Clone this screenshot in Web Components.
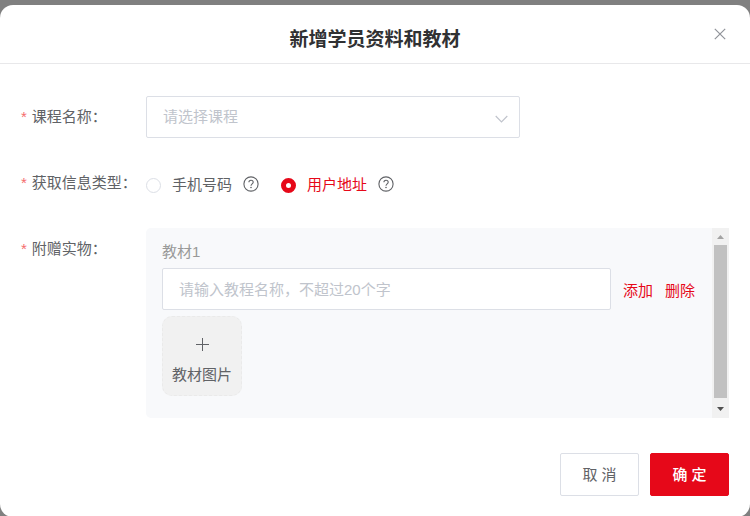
<!DOCTYPE html>
<html lang="zh-CN">
<head>
<meta charset="utf-8">
<meta name="viewport" content="width=device-width, initial-scale=1">
<title>新增学员资料和教材</title>
<style>
  :root {
    --red: #e60819;
    --text: #606266;
    --title: #303133;
    --hint: #c0c4cc;
    --line: #dcdfe6;
    --panel: #f8f9fb;
  }
  body {
    margin: 0;
    background: #808080;
    color: var(--text);
    font: 15px/20px "Liberation Sans", "Noto Sans CJK SC", sans-serif;
  }
</style>
</head>
<body>
<modal-dialog heading="新增学员资料和教材">
  <select-field label="课程名称" placeholder="请选择课程"></select-field>
  <radio-field label="获取信息类型">
    <radio-option name="type" value="phone" label="手机号码"></radio-option>
    <radio-option name="type" value="address" label="用户地址" checked></radio-option>
  </radio-field>
  <gift-field label="附赠实物">
    <gift-item label="教材1" placeholder="请输入教程名称，不超过20个字"></gift-item>
  </gift-field>
  <action-button slot="footer">取 消</action-button>
  <action-button slot="footer" primary>确 定</action-button>
</modal-dialog>

<script>
/**
 * Attach an open shadow root filled from the given markup
 * @param {HTMLElement} host
 * @param {string} html
 * @returns {ShadowRoot} root
 */
const render = (host, html) => {
  const template = document.createElement('template');
  template.innerHTML = html;
  const root = host.attachShadow({mode: 'open'});
  root.appendChild(template.content.cloneNode(true));
  return root;
};

const controlStyle = `
  * { box-sizing: border-box; }
  select, input[type=text] {
    width: 100%;
    height: 42px;
    margin: 0;
    padding: 0 16px;
    border: 1px solid var(--line);
    border-radius: 2px;
    background: #fff;
    color: var(--text);
    font: inherit;
    outline: none;
  }
  select:focus, input[type=text]:focus { border-color: var(--red); }
  ::placeholder { color: var(--hint); opacity: 1; }
`;

/**
 * @class ModalDialog
 */
class ModalDialog extends HTMLElement {
  connectedCallback () {
    render(this, `
      <style>
        :host { display: block; padding-top: 5px; }
        section { background: #fff; border-radius: 13px; }
        header {
          display: grid;
          grid-template-columns: 20px 1fr 20px;
          align-items: center;
          height: 58px;
          padding: 0 20px;
          border-bottom: 1px solid #e8e8ea;
        }
        h1 {
          grid-column: 2;
          margin: 0;
          padding-top: 12px;
          color: var(--title);
          font-size: 19px;
          line-height: 28px;
          text-align: center;
        }
        .close {
          display: flex;
          justify-content: center;
          align-items: center;
          height: 20px;
          padding: 0;
          border: 0;
          background: none;
          color: #909399;
          cursor: pointer;
        }
        .body {
          display: flex;
          flex-direction: column;
          gap: 24px;
          padding: 32px 21px 35px;
        }
        footer {
          display: flex;
          justify-content: flex-end;
          gap: 11px;
          padding: 0 21px 21px;
        }
      </style>
      <section role="dialog" aria-labelledby="heading">
        <header>
          <h1 id="heading">${this.getAttribute('heading')}</h1>
          <button class="close" type="button" aria-label="关闭">
            <svg width="12" height="12" viewBox="0 0 12 12" fill="none" stroke="currentColor" stroke-width="1.2"><path d="M.8.8l10.4 10.4M11.2.8L.8 11.2"/></svg>
          </button>
        </header>
        <div class="body"><slot></slot></div>
        <footer><slot name="footer"></slot></footer>
      </section>
    `);
  }
}

/**
 * Required mark and label on the left, control on the right
 * @class FieldRow
 */
class FieldRow extends HTMLElement {
  connectedCallback () {
    render(this, `
      <style>
        :host { display: flex; align-items: flex-start; }
        .label {
          display: flex;
          flex: none;
          gap: 5px;
          width: 125px;
          line-height: 42px;
          white-space: nowrap;
        }
        .mark { color: #f56c6c; }
        .content { flex: 1; min-width: 0; }
      </style>
      <div class="label"><span class="mark">*</span><slot name="label"></slot></div>
      <div class="content"><slot></slot></div>
    `);
  }
}

/**
 * @class SelectField
 */
class SelectField extends HTMLElement {
  connectedCallback () {
    render(this, `
      <style>
        :host { display: block; }
        ${controlStyle}
        .box { display: grid; align-items: center; max-width: 374px; }
        .box > * { grid-area: 1 / 1; }
        select { appearance: none; color: var(--hint); }
        svg { justify-self: end; margin-right: 12px; margin-top: 4px; pointer-events: none; }
      </style>
      <field-row>
        <label slot="label" for="control">${this.getAttribute('label')}：</label>
        <div class="box">
          <select id="control"><option>${this.getAttribute('placeholder')}</option></select>
          <svg width="13" height="8" viewBox="0 0 13 8" fill="none" stroke="#c0c4cc" stroke-width="1.2"><path d="M.7 1l5.8 5.8L12.3 1"/></svg>
        </div>
      </field-row>
    `);
  }
}

/**
 * @class RadioField
 */
class RadioField extends HTMLElement {
  connectedCallback () {
    render(this, `
      <style>
        :host { display: block; }
        .group {
          display: flex;
          align-items: center;
          gap: 22px;
          box-sizing: border-box;
          height: 42px;
          padding-top: 4px;
        }
      </style>
      <field-row>
        <span slot="label" id="label">${this.getAttribute('label')}：</span>
        <div class="group" role="radiogroup" aria-labelledby="label"><slot></slot></div>
      </field-row>
    `);
    this.addEventListener('pick', (e) => {
      this.querySelectorAll('radio-option').forEach((option) => {
        option.checked = option === e.target;
      });
    });
  }
}

/**
 * @class RadioOption
 */
class RadioOption extends HTMLElement {
  connectedCallback () {
    const root = render(this, `
      <style>
        :host { display: flex; align-items: center; gap: 11px; }
        label { display: flex; align-items: center; gap: 11px; cursor: pointer; }
        input {
          appearance: none;
          box-sizing: border-box;
          width: 15px;
          height: 15px;
          margin: 0;
          border: 1px solid var(--line);
          border-radius: 50%;
          background: #fff;
        }
        input:checked { border: 5px solid var(--red); }
        input:checked + span { color: var(--red); }
        button {
          display: flex;
          padding: 0 0 2px;
          border: 0;
          background: none;
          color: var(--text);
          cursor: help;
        }
      </style>
      <label>
        <input type="radio" name="${this.getAttribute('name')}" value="${this.getAttribute('value')}">
        <span>${this.getAttribute('label')}</span>
      </label>
      <button type="button" aria-label="说明">
        <svg width="16" height="16" viewBox="0 0 16 16" fill="none" stroke="currentColor" stroke-width="1.1"><circle cx="8" cy="8" r="7.1"/><path d="M5.9 6.3c0-1.3.9-2.1 2.1-2.1s2.200.8 2.200 2c0 1.600-2.200 1.700-2.200 3.500"/><circle cx="8" cy="11.5" r=".8" fill="currentColor" stroke="none"/></svg>
      </button>
    `);
    this.$input = root.querySelector('input');
    this.$input.checked = this.hasAttribute('checked');
    this.$input.addEventListener('change', () => {
      this.dispatchEvent(new CustomEvent('pick', {bubbles: true}));
    });
  }
  set checked (value) {
    this.$input.checked = value;
  }
}

/**
 * Grey panel holding the gift items, with its scroll bar
 * @class GiftField
 */
class GiftField extends HTMLElement {
  connectedCallback () {
    render(this, `
      <style>
        :host { display: block; }
        .panel {
          display: flex;
          min-height: 190px;
          border-radius: 5px 0 0 5px;
          background: var(--panel);
        }
        .items { flex: 1; min-width: 0; padding: 14px 17px 22px 16px; }
        .bar {
          display: flex;
          flex-direction: column;
          align-items: center;
          width: 17px;
          background: #f1f1f1;
        }
        .thumb { flex: 1; width: 13px; margin-bottom: 3px; background: #c1c1c1; }
      </style>
      <field-row>
        <span slot="label" id="label">${this.getAttribute('label')}：</span>
        <div class="panel" role="group" aria-labelledby="label">
          <div class="items"><slot></slot></div>
          <div class="bar" aria-hidden="true">
            <svg width="17" height="17" viewBox="0 0 17 17"><path d="M5 11h7L8.5 7z" fill="#a3a3a3"/></svg>
            <div class="thumb"></div>
            <svg width="17" height="17" viewBox="0 0 17 17"><path d="M5 6h7l-3.5 4z" fill="#505050"/></svg>
          </div>
        </div>
      </field-row>
    `);
  }
}

/**
 * @class GiftItem
 */
class GiftItem extends HTMLElement {
  connectedCallback () {
    render(this, `
      <style>
        :host { display: block; }
        ${controlStyle}
        .name { display: block; padding-bottom: 6px; color: #999; }
        .line { display: flex; align-items: center; gap: 12px; }
        input[type=text] { flex: 1; min-width: 0; }
        button { font: inherit; cursor: pointer; }
        .link { flex: none; padding: 4px 0 0; border: 0; background: none; color: var(--red); }
        .upload {
          display: flex;
          flex-direction: column;
          align-items: center;
          gap: 14px;
          width: 80px;
          height: 80px;
          margin-top: 6px;
          padding: 21px 0 0;
          border: 1px dashed #eaeaea;
          border-radius: 10px;
          background: #f1f1f1;
          color: var(--text);
        }
        svg { flex: none; }
      </style>
      <label class="name" for="name">${this.getAttribute('label')}</label>
      <div class="line">
        <input type="text" id="name" maxlength="20" placeholder="${this.getAttribute('placeholder')}">
        <button class="link" type="button">添加</button>
        <button class="link" type="button">删除</button>
      </div>
      <button class="upload" type="button">
        <svg width="13" height="13" viewBox="0 0 13 13" stroke="currentColor"><path d="M0 6.5h13M6.5 0v13"/></svg>
        <span>教材图片</span>
      </button>
    `);
  }
}

/**
 * @class ActionButton
 */
class ActionButton extends HTMLElement {
  connectedCallback () {
    render(this, `
      <style>
        :host { display: block; }
        button {
          min-width: 79px;
          height: 43px;
          padding: 0 20px;
          border: 1px solid var(--line);
          border-radius: 2px;
          background: #fff;
          color: var(--text);
          font: inherit;
          cursor: pointer;
        }
        :host([primary]) button {
          border-color: var(--red);
          background: var(--red);
          color: #fff;
          font-weight: 500;
        }
      </style>
      <button type="button"><slot></slot></button>
    `);
  }
}

// Register
customElements.define('field-row', FieldRow);
customElements.define('select-field', SelectField);
customElements.define('radio-option', RadioOption);
customElements.define('radio-field', RadioField);
customElements.define('gift-item', GiftItem);
customElements.define('gift-field', GiftField);
customElements.define('action-button', ActionButton);
customElements.define('modal-dialog', ModalDialog);
</script>
</body>
</html>
